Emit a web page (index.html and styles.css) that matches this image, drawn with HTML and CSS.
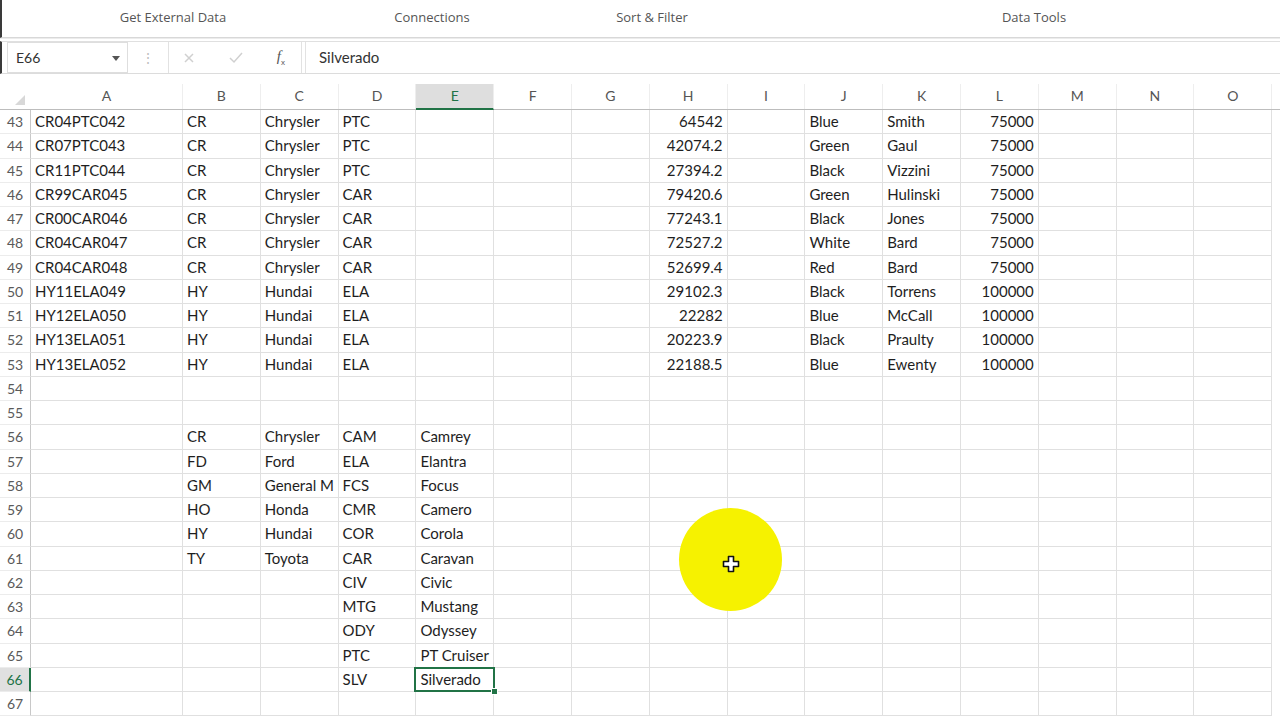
FILE: index.html
```html
<!DOCTYPE html>
<html>
<head>
<meta charset="utf-8">
<link rel="stylesheet" href="styles.css">
</head>
<body>
<div class="app">
  <div class="ribbon">
    <div class="grp g1">Get External Data</div>
    <div class="grp g2">Connections</div>
    <div class="grp g3">Sort &amp; Filter</div>
    <div class="grp g4">Data Tools</div>
  </div>
  <div class="fbar">
    <div class="namebox"><span>E66</span><svg class="dd" width="8" height="5" viewBox="0 0 8 5"><path d="M0 0h8L4 5z" fill="#555"/></svg></div>
    <div class="dots">⋮</div>
    <div class="fxbox">
      <svg width="12" height="12" viewBox="0 0 12 12"><path d="M2 2l8 8M10 2l-8 8" stroke="#d0d0d0" stroke-width="1.5"/></svg>
      <svg width="14" height="12" viewBox="0 0 14 12"><path d="M1 6l4 4 8-9" stroke="#d0d0d0" stroke-width="1.5" fill="none"/></svg>
      <span class="fx"><i>f</i><sub>x</sub></span>
    </div>
    <div class="finput">Silverado</div>
  </div>
  <div class="hdr">
    <span class="corner"><svg width="10" height="10" viewBox="0 0 10 10"><path d="M10 0v10H0z" fill="#d8d8d8"/></svg></span>
    <span>A</span><span>B</span><span>C</span><span>D</span><span class="sel">E</span><span>F</span><span>G</span><span>H</span><span>I</span><span>J</span><span>K</span><span>L</span><span>M</span><span>N</span><span>O</span>
  </div>
  <div class="sheet">
    <div class="r"><span class="rh">43</span><span>CR04PTC042</span><span>CR</span><span>Chrysler</span><span>PTC</span><span></span><span></span><span></span><span class="n">64542</span><span></span><span>Blue</span><span>Smith</span><span class="n">75000</span><span></span><span></span><span></span></div>
    <div class="r"><span class="rh">44</span><span>CR07PTC043</span><span>CR</span><span>Chrysler</span><span>PTC</span><span></span><span></span><span></span><span class="n">42074.2</span><span></span><span>Green</span><span>Gaul</span><span class="n">75000</span><span></span><span></span><span></span></div>
    <div class="r"><span class="rh">45</span><span>CR11PTC044</span><span>CR</span><span>Chrysler</span><span>PTC</span><span></span><span></span><span></span><span class="n">27394.2</span><span></span><span>Black</span><span>Vizzini</span><span class="n">75000</span><span></span><span></span><span></span></div>
    <div class="r"><span class="rh">46</span><span>CR99CAR045</span><span>CR</span><span>Chrysler</span><span>CAR</span><span></span><span></span><span></span><span class="n">79420.6</span><span></span><span>Green</span><span>Hulinski</span><span class="n">75000</span><span></span><span></span><span></span></div>
    <div class="r"><span class="rh">47</span><span>CR00CAR046</span><span>CR</span><span>Chrysler</span><span>CAR</span><span></span><span></span><span></span><span class="n">77243.1</span><span></span><span>Black</span><span>Jones</span><span class="n">75000</span><span></span><span></span><span></span></div>
    <div class="r"><span class="rh">48</span><span>CR04CAR047</span><span>CR</span><span>Chrysler</span><span>CAR</span><span></span><span></span><span></span><span class="n">72527.2</span><span></span><span>White</span><span>Bard</span><span class="n">75000</span><span></span><span></span><span></span></div>
    <div class="r"><span class="rh">49</span><span>CR04CAR048</span><span>CR</span><span>Chrysler</span><span>CAR</span><span></span><span></span><span></span><span class="n">52699.4</span><span></span><span>Red</span><span>Bard</span><span class="n">75000</span><span></span><span></span><span></span></div>
    <div class="r"><span class="rh">50</span><span>HY11ELA049</span><span>HY</span><span>Hundai</span><span>ELA</span><span></span><span></span><span></span><span class="n">29102.3</span><span></span><span>Black</span><span>Torrens</span><span class="n">100000</span><span></span><span></span><span></span></div>
    <div class="r"><span class="rh">51</span><span>HY12ELA050</span><span>HY</span><span>Hundai</span><span>ELA</span><span></span><span></span><span></span><span class="n">22282</span><span></span><span>Blue</span><span>McCall</span><span class="n">100000</span><span></span><span></span><span></span></div>
    <div class="r"><span class="rh">52</span><span>HY13ELA051</span><span>HY</span><span>Hundai</span><span>ELA</span><span></span><span></span><span></span><span class="n">20223.9</span><span></span><span>Black</span><span>Praulty</span><span class="n">100000</span><span></span><span></span><span></span></div>
    <div class="r"><span class="rh">53</span><span>HY13ELA052</span><span>HY</span><span>Hundai</span><span>ELA</span><span></span><span></span><span></span><span class="n">22188.5</span><span></span><span>Blue</span><span>Ewenty</span><span class="n">100000</span><span></span><span></span><span></span></div>
    <div class="r"><span class="rh">54</span><span></span><span></span><span></span><span></span><span></span><span></span><span></span><span></span><span></span><span></span><span></span><span></span><span></span><span></span><span></span></div>
    <div class="r"><span class="rh">55</span><span></span><span></span><span></span><span></span><span></span><span></span><span></span><span></span><span></span><span></span><span></span><span></span><span></span><span></span><span></span></div>
    <div class="r"><span class="rh">56</span><span></span><span>CR</span><span>Chrysler</span><span>CAM</span><span>Camrey</span><span></span><span></span><span></span><span></span><span></span><span></span><span></span><span></span><span></span><span></span></div>
    <div class="r"><span class="rh">57</span><span></span><span>FD</span><span>Ford</span><span>ELA</span><span>Elantra</span><span></span><span></span><span></span><span></span><span></span><span></span><span></span><span></span><span></span><span></span></div>
    <div class="r"><span class="rh">58</span><span></span><span>GM</span><span>General M</span><span>FCS</span><span>Focus</span><span></span><span></span><span></span><span></span><span></span><span></span><span></span><span></span><span></span><span></span></div>
    <div class="r"><span class="rh">59</span><span></span><span>HO</span><span>Honda</span><span>CMR</span><span>Camero</span><span></span><span></span><span></span><span></span><span></span><span></span><span></span><span></span><span></span><span></span></div>
    <div class="r"><span class="rh">60</span><span></span><span>HY</span><span>Hundai</span><span>COR</span><span>Corola</span><span></span><span></span><span></span><span></span><span></span><span></span><span></span><span></span><span></span><span></span></div>
    <div class="r"><span class="rh">61</span><span></span><span>TY</span><span>Toyota</span><span>CAR</span><span>Caravan</span><span></span><span></span><span></span><span></span><span></span><span></span><span></span><span></span><span></span><span></span></div>
    <div class="r"><span class="rh">62</span><span></span><span></span><span></span><span>CIV</span><span>Civic</span><span></span><span></span><span></span><span></span><span></span><span></span><span></span><span></span><span></span><span></span></div>
    <div class="r"><span class="rh">63</span><span></span><span></span><span></span><span>MTG</span><span>Mustang</span><span></span><span></span><span></span><span></span><span></span><span></span><span></span><span></span><span></span><span></span></div>
    <div class="r"><span class="rh">64</span><span></span><span></span><span></span><span>ODY</span><span>Odyssey</span><span></span><span></span><span></span><span></span><span></span><span></span><span></span><span></span><span></span><span></span></div>
    <div class="r"><span class="rh">65</span><span></span><span></span><span></span><span>PTC</span><span>PT Cruiser</span><span></span><span></span><span></span><span></span><span></span><span></span><span></span><span></span><span></span><span></span></div>
    <div class="r"><span class="rh sel">66</span><span></span><span></span><span></span><span>SLV</span><span class="cur">Silverado</span><span></span><span></span><span></span><span></span><span></span><span></span><span></span><span></span><span></span><span></span></div>
    <div class="r"><span class="rh">67</span><span></span><span></span><span></span><span></span><span></span><span></span><span></span><span></span><span></span><span></span><span></span><span></span><span></span><span></span><span></span></div>
  </div>
  <div class="spot">
    <svg width="18" height="18" viewBox="0 0 18 18"><path d="M6.5 1.5h5v5h5v5h-5v5h-5v-5h-5v-5h5z" fill="#fff" stroke="#111" stroke-width="1.6" stroke-linejoin="round"/></svg>
  </div>
</div>
</body>
</html>
```
FILE: styles.css
```css
html, body {
  margin: 0;
  padding: 0;
  background: #fff;
}
body {
  width: 1280px;
  height: 720px;
  overflow: hidden;
  font-family: Lato, "Liberation Sans", sans-serif;
  color: #1e1e1e;
}
.app {
  position: relative;
  width: 1280px;
  height: 720px;
  overflow: hidden;
}
.ribbon {
  display: flex;
  height: 38px;
  border-bottom: 1px solid #d8d8d8;
  box-shadow: 0 1px 0 #ececec;
  border-left: 2px solid #3a3a3a;
  box-sizing: border-box;
}
.grp {
  flex: none;
  text-align: center;
  font-family: "Open Sans", "Liberation Sans", sans-serif;
  font-size: 13px;
  color: #555;
  padding-top: 8px;
  line-height: 18px;
}
.g1 { width: 342px; }
.g2 { width: 176px; }
.g3 { width: 264px; }
.g4 { width: 500px; }
.fbar {
  display: flex;
  align-items: stretch;
  height: 33px;
  margin-top: 3px;
  border-top: 1px solid #e0e0e0;
  border-bottom: 1px solid #dcdcdc;
  border-left: 2px solid #3a3a3a;
  box-sizing: border-box;
}
.namebox {
  width: 121px;
  margin-left: 5px;
  border: 1px solid #dedede;
  box-sizing: border-box;
  display: flex;
  align-items: center;
  justify-content: space-between;
  padding: 0 7px 0 8px;
  font-size: 14px;
  color: #333;
}
.dd { margin-top: 1px; }
.dots {
  width: 40px;
  text-align: center;
  color: #c0c0c0;
  font-size: 14px;
  line-height: 31px;
}
.fxbox {
  width: 134px;
  border: 1px solid #e2e2e2;
  border-top: none;
  border-bottom: none;
  box-sizing: border-box;
  display: flex;
  align-items: center;
  justify-content: space-between;
  padding: 0 16px 0 14px;
}
.fx {
  font-family: "Liberation Serif", serif;
  font-size: 15px;
  color: #555;
}
.fx sub { font-size: 8px; font-style: normal; font-family: "Liberation Sans", sans-serif; }
.finput {
  flex: 1;
  margin-left: 3px;
  border-left: 1px solid #e2e2e2;
  padding-left: 13px;
  font-size: 15px;
  line-height: 31px;
  color: #333;
}
.hdr, .r {
  display: grid;
  grid-template-columns: 31px 152px repeat(14, 77.8px);
}
.hdr {
  height: 26px;
  margin-top: 10px;
  border-bottom: 1px solid #bdbdbd;
  border-left: 2px solid #3a3a3a;
  margin-left: -2px;
  box-sizing: border-box;
}
.hdr span {
  text-align: center;
  font-size: 14px;
  color: #555;
  line-height: 24px;
  border-right: 1px solid #eeeeee;
}
.hdr .corner {
  display: flex;
  align-items: flex-end;
  justify-content: flex-end;
  padding: 0 6px 4px 0;
  border-right: none;
}
.hdr .sel {
  background: #dedede;
  color: #217346;
  border-bottom: 2px solid #217346;
  margin-bottom: -1px;
}
.r {
  height: 24.26px;
}
.r span {
  display: block;
  box-sizing: border-box;
  border-right: 1px solid #e0e0e0;
  border-bottom: 1px solid #e0e0e0;
  padding: 0 4px 0 4px;
  font-size: 15px;
  line-height: 23px;
  white-space: nowrap;
  overflow: hidden;
}
.r .n { text-align: right; }
.r .rh {
  text-align: center;
  padding: 0;
  font-size: 14px;
  color: #5a5a5a;
  border-right: 1px solid #c8c8c8;
  border-bottom: 1px solid #ececec;
}
.r .rh.sel {
  background: #e0e0e0;
  color: #217346;
  border-right: 2px solid #217346;
}
.r .cur {
  position: relative;
  overflow: visible;
}
.r .cur::before {
  content: "";
  position: absolute;
  left: -2px;
  top: -1px;
  right: -2px;
  bottom: -1px;
  border: 2px solid #217346;
}
.r .cur::after {
  content: "";
  position: absolute;
  right: -5px;
  bottom: -4px;
  width: 5px;
  height: 5px;
  background: #217346;
  border: 1px solid #fff;
}
.spot {
  position: absolute;
  left: 679px;
  top: 508px;
  width: 103px;
  height: 103px;
  border-radius: 50%;
  background: #f6f200;
  display: flex;
  align-items: center;
  justify-content: center;
}
.spot svg {
  margin-top: 9px;
}
```
